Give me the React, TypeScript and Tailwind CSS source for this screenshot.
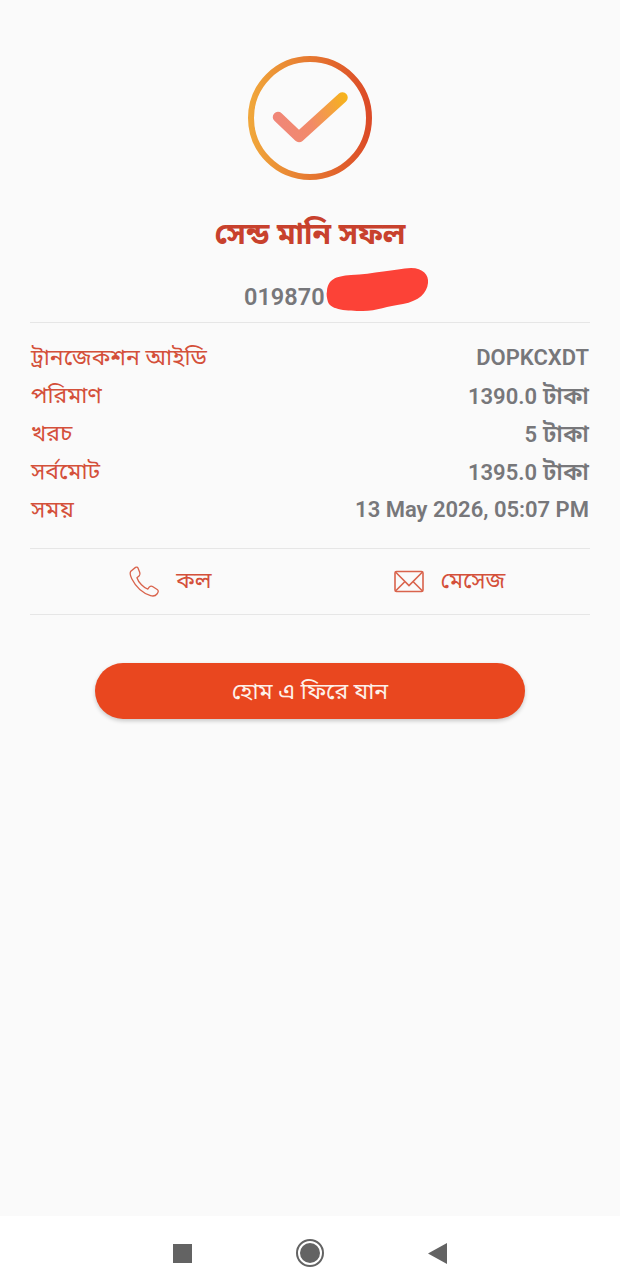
const font = { fontFamily: 'Roboto, "Noto Sans Bengali", "Noto Sans", sans-serif' };

function Badge() {
  return (
    <svg width="124" height="124" viewBox="0 0 124 124" fill="none">
      <defs>
        <linearGradient id="ring" x1="0" y1="0" x2="1" y2="0">
          <stop offset="0" stopColor="#f0a63a" />
          <stop offset="1" stopColor="#dc4b27" />
        </linearGradient>
        <linearGradient id="tick" x1="27" y1="70" x2="97" y2="40" gradientUnits="userSpaceOnUse">
          <stop offset="0" stopColor="#f0867a" />
          <stop offset="0.45" stopColor="#f28a68" />
          <stop offset="1" stopColor="#f6b31c" />
        </linearGradient>
      </defs>
      <circle cx="62" cy="62" r="59" stroke="url(#ring)" strokeWidth="6" />
      <path d="M30 61 L51 81 L94.5 41.5" stroke="url(#tick)" strokeWidth="10.5" strokeLinecap="round" strokeLinejoin="round" />
    </svg>
  );
}

function Row({ label, value, unit }: { label: string; value: string; unit?: string }) {
  return (
    <div className="flex h-[38px] items-center justify-between">
      <span className="pl-px text-[23px] leading-[38px] text-[#d4503a]">{label}</span>
      <span className="pr-px text-[22px] leading-[38px] font-semibold text-[#77777a]">
        {value}
        {unit && <span className="text-[24px]"> {unit}</span>}
      </span>
    </div>
  );
}

export default function App() {
  return (
    <div className="flex h-[1280px] w-[620px] flex-col bg-[#fafafa]" style={font}>
      <main className="flex flex-1 flex-col px-[30px] pt-[56px]">
        <div className="flex justify-center">
          <Badge />
        </div>
        <h1 className="mt-[30px] flex h-[46px] items-center justify-center text-[30px] font-bold text-[#c8412d]">সেন্ড মানি সফল</h1>
        <div className="relative mt-[25px] flex h-[34px] items-center pl-[214px] text-[23.5px] font-semibold text-[#77777a]">
          019870
          <svg className="absolute left-[295px] top-[-16px]" width="104" height="48" viewBox="0 0 104 48">
            <path d="M2 26 C3 15 10 11 26 10 C48 9 70 4 86 3 C98 3 104 10 103 18 C102 28 94 36 78 39 C62 41 52 46 38 46 C22 46 6 45 3 37 C2 33 1 30 2 26 Z" fill="#fc4237" />
          </svg>
        </div>
        <div className="mt-[7px] h-px bg-[#e6e6e6]" />
        <div className="mt-[16px] flex flex-col">
          <Row label="ট্রানজেকশন আইডি" value="DOPKCXDT" />
          <Row label="পরিমাণ" value="1390.0" unit="টাকা" />
          <Row label="খরচ" value="5" unit="টাকা" />
          <Row label="সর্বমোট" value="1395.0" unit="টাকা" />
          <Row label="সময়" value="13 May 2026, 05:07 PM" />
        </div>
        <div className="mt-[19px] h-px bg-[#e6e6e6]" />
        <div className="flex h-[65px] items-center">
          <div className="flex w-[280px] items-center justify-center gap-[16px]">
            <svg width="32" height="33" viewBox="0 0 34 34" fill="none" stroke="#d9634c" strokeWidth="1.4" strokeLinejoin="round">
              <path d="M8 2 L3 6 C1.5 8 2 10 4 14 C8 22 15 29 24 32 C27 33 29.5 32 31 30 C32.5 28 32.5 26.5 31 25.5 L26.5 22.5 C25 21.5 23.5 22 22.5 23 L21 25 C17 24 11 18 9.5 13 L12 11 C13 10 13 9 12.5 7.5 L10.5 2.5 C10 1.5 9 1.5 8 2 Z" />
            </svg>
            <span className="text-[23px] text-[#d4503a]">কল</span>
          </div>
          <div className="flex w-[280px] items-center justify-center gap-[17px] pr-[1px]">
            <svg width="30" height="23" viewBox="0 0 30 22" fill="none" stroke="#d9634c" strokeWidth="1.6">
              <rect x="1" y="1" width="28" height="20" rx="1.5" />
              <path d="M1.5 1.5 L15 15 L28.5 1.5 M1.5 20.5 L11 11 M28.5 20.5 L19 11" />
            </svg>
            <span className="text-[23px] text-[#d4503a]">মেসেজ</span>
          </div>
        </div>
        <div className="h-px bg-[#e6e6e6]" />
        <div className="mt-[48px] flex justify-center">
          <button className="flex h-[56px] w-[430px] items-center justify-center rounded-full bg-[#e9471f] pt-[3px] text-[23px] text-[#fdf1ea] shadow-[0_2px_4px_rgba(0,0,0,0.2)]">
            হোম এ ফিরে যান
          </button>
        </div>
      </main>
      <nav className="flex h-[64px] items-center justify-center bg-white pt-[10px]">
        <div className="flex w-[274px] items-center justify-between">
          <div className="h-[19px] w-[19px] bg-[#636363]" />
          <svg width="30" height="30" viewBox="0 0 30 30">
            <circle cx="15" cy="15" r="13" fill="none" stroke="#636363" strokeWidth="2" />
            <circle cx="15" cy="15" r="10" fill="#636363" />
          </svg>
          <svg width="19" height="21" viewBox="0 0 19 21">
            <path d="M0 10.5 L19 0 V21 Z" fill="#636363" />
          </svg>
        </div>
      </nav>
    </div>
  );
}
